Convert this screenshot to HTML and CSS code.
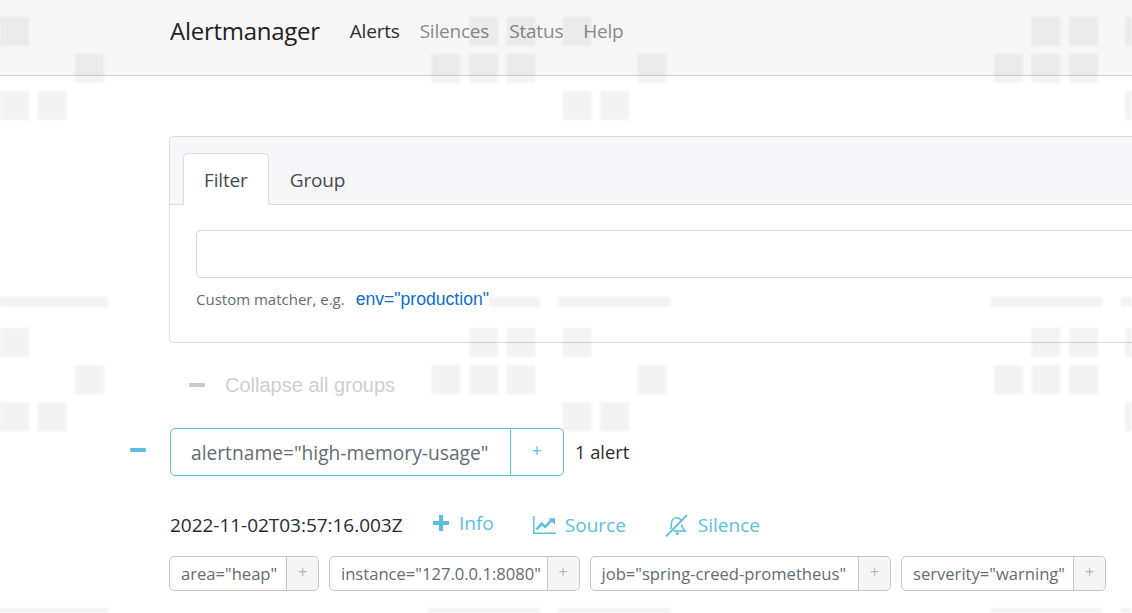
FILE: index.html
```html
<!DOCTYPE html>
<html lang="en">
<head>
    <meta charset="UTF-8">
    <title>Alertmanager</title>
    <link rel="stylesheet" href="styles.css">
</head>
<body>

<nav class="navbar">
    <a class="brand">Alertmanager</a>
    <a class="nav-link active">Alerts</a>
    <a class="nav-link">Silences</a>
    <a class="nav-link">Status</a>
    <a class="nav-link">Help</a>
</nav>

<main class="container">
    <section class="card">
        <div class="card-header">
            <a class="tab active">Filter</a>
            <a class="tab">Group</a>
        </div>
        <div class="card-body">
            <input class="filter-input" type="text">
            <div class="hint">
                <small>Custom matcher, e.g.</small>
                <a class="example">env="production"</a>
            </div>
        </div>
    </section>

    <div class="collapse-all">
        <span class="dash muted"></span>
        <span>Collapse all groups</span>
    </div>

    <div class="group-row">
        <span class="dash info group-dash"></span>
        <div class="group-label">
            <span class="group-text">alertname="high-memory-usage"</span>
            <span class="group-add">+</span>
        </div>
        <span class="alert-count">1 alert</span>
    </div>

    <div class="alert-row">
        <span class="timestamp">2022-11-02T03:57:16.003Z</span>
        <a class="action action-info">
            <svg class="icon-plus" viewBox="0 0 16 16"><path d="M6 0h4v6h6v4h-6v6H6v-6H0V6h6z"/></svg>
            Info
        </a>
        <a class="action action-source">
            <svg class="icon-chart" viewBox="0 0 23 18"><path d="M.8 0v17.200H23" fill="none" stroke="currentColor" stroke-width="1.400"/><path d="M3.500 13.500 8.600 7.600l3.600 3.400 6-6.600" fill="none" stroke="currentColor" stroke-width="2.600"/><path d="M15.500 2.200h6.500v6.500z"/></svg>
            Source
        </a>
        <a class="action action-silence">
            <svg class="icon-bell" viewBox="0 0 23 23"><path d="M16.600 7.600C15.600 5.400 13.800 3.800 11.500 3.800 8.400 3.800 6.500 6.400 6.500 9.500c0 2.300-.4 4.200-1 5.700M16.700 10.200c.3 3.400 1.600 5.300 3.300 6.700H8.200" fill="none" stroke="currentColor" stroke-width="1.500"/><path d="M10.300 18.500h4c0 1.500-.9 2.500-2 2.500s-2-1-2-2.500z"/><path d="M1 22.300 22 1" fill="none" stroke="currentColor" stroke-width="1.800"/></svg>
            Silence
        </a>
    </div>

    <div class="tags">
        <div class="tag"><span class="tag-text">area="heap"</span><span class="tag-add">+</span></div>
        <div class="tag"><span class="tag-text">instance="127.0.0.1:8080"</span><span class="tag-add">+</span></div>
        <div class="tag"><span class="tag-text">job="spring-creed-prometheus"</span><span class="tag-add">+</span></div>
        <div class="tag"><span class="tag-text">serverity="warning"</span><span class="tag-add">+</span></div>
    </div>
</main>

<!-- watermark tiles over the whole page -->
<svg class="watermark" width="1132" height="613">
    <defs>
        <pattern id="tiles" width="562.5" height="311" patternUnits="userSpaceOnUse">
            <rect x="0" y="17" width="29" height="29"/>
            <rect x="469" y="17" width="29" height="29"/>
            <rect x="506.500" y="17" width="29" height="29"/>
            <rect x="75" y="54" width="29" height="29"/>
            <rect x="431.500" y="54" width="29" height="29"/>
            <rect x="469" y="54" width="29" height="29"/>
            <rect x="506.500" y="54" width="29" height="29"/>
            <rect x="0" y="91" width="29" height="29"/>
            <rect x="37.500" y="91" width="29" height="29"/>
            <rect x="0" y="297" width="108" height="10"/>
            <rect x="558" y="297" width="4.500" height="10"/>
            <rect x="428" y="297" width="112" height="10"/>
        </pattern>
    </defs>
    <rect width="1132" height="613" fill="url(#tiles)"/>
</svg>

</body>
</html>
```

FILE: styles.css
```css
html, body {
    margin: 0;
    height: 100%;
    overflow: hidden;
}
body {
    position: relative;
    font-family: "Open Sans", "Noto Sans", sans-serif;
    font-size: 20px;
    color: #292b2c;
    background-color: #fff;
}
a {
    text-decoration: none;
}
svg {
    display: block;
}

.navbar {
    display: flex;
    align-items: center;
    height: 75px;
    padding-left: 170px;
    background-color: #f7f7f7;
    border-bottom: 1px solid #d2d2d2;
}
.brand {
    font-size: 24px;
    letter-spacing: -0.27px;
    color: #1f1f1f;
    margin-right: 30px;
    margin-bottom: 14px;
}
.nav-link {
    font-size: 19px;
    letter-spacing: -0.2px;
    color: #8a8a8a;
    margin-right: 20px;
    margin-bottom: 14px;
}
.nav-link.active {
    color: #2c2c2c;
}

.container {
    padding-left: 169px;
}

/* the card runs off the right of the window, so no right edge */
.card {
    margin-top: 60px;
    border: 1px solid #dcdcdc;
    border-right: none;
    border-radius: 5px 0 0 5px;
    box-sizing: border-box;
    height: 207px;
}
.card-header {
    display: flex;
    height: 68px;
    box-sizing: border-box;
    padding: 16px 0 0 13px;
    background-color: #f7f7f9;
    border-bottom: 1px solid #dcdcdc;
    border-radius: 5px 0 0 0;
}
.tab {
    font-size: 19px;
    letter-spacing: -0.15px;
    padding: 13px 20px 0;
    height: 52px;
    box-sizing: border-box;
    color: #464a4c;
    border: 1px solid transparent;
}
.tab.active {
    background-color: #fff;
    border-color: #dcdcdc;
    border-bottom-color: #fff;
    border-radius: 5px 5px 0 0;
}
.card-body {
    padding: 25px 0 25px 26px;
}
.filter-input {
    display: block;
    width: 100%;
    height: 48px;
    box-sizing: border-box;
    border: 1px solid #d6d6d6;
    border-right: none;
    border-radius: 5px 0 0 5px;
    background-color: #fff;
}
.hint {
    display: flex;
    align-items: center;
    gap: 11px;
    margin-top: 9px;
    height: 24px;
}
.hint small {
    font-size: 15px;
    color: #636c72;
}
/* sits above the watermark, its white box hides the band behind it */
.example {
    position: relative;
    z-index: 1;
    font-family: "Liberation Sans", Arial, sans-serif;
    font-size: 17.6px;
    color: #0a6ed1;
    background-color: #fff;
}

.dash {
    display: block;
    width: 16px;
    height: 4px;
    border-radius: 1px;
}
.dash.muted {
    background-color: #c9c9c9;
}
.dash.info {
    background-color: #5bc0de;
}
.collapse-all {
    display: flex;
    align-items: center;
    gap: 20px;
    height: 24px;
    margin-top: 30px;
    padding-left: 20px;
    font-family: "Liberation Sans", Arial, sans-serif;
    font-size: 20px;
    color: #cfcfcf;
}

.group-row {
    position: relative;
    display: flex;
    align-items: center;
    margin-top: 31px;
    margin-left: 1px;
}
.group-dash {
    position: absolute;
    left: -40px;
    top: 20px;
}
.group-label {
    display: flex;
    height: 48px;
    box-sizing: border-box;
    border: 1px solid #5bc0de;
    border-radius: 5px;
    color: #636c72;
}
.group-text {
    width: 340px;
    box-sizing: border-box;
    padding-left: 20px;
    font-size: 19.2px;
    line-height: 47px;
    border-right: 1px solid #5bc0de;
    white-space: nowrap;
}
.group-add {
    width: 52px;
    text-align: center;
    font-size: 18px;
    line-height: 42px;
    color: #5bc0de;
}
.alert-count {
    margin-left: 11px;
    margin-bottom: 2px;
    font-size: 18.3px;
    color: #292b2c;
}

.alert-row {
    display: flex;
    align-items: center;
    height: 40px;
    margin-top: 29px;
    margin-left: 1px;
}
.timestamp {
    width: 263px;
    font-size: 19px;
    letter-spacing: -0.03px;
}
.action {
    display: flex;
    align-items: center;
    font-size: 19px;
    color: #5bc0de;
    fill: #5bc0de;
    margin-right: 39px;
}
.action-info {
    margin-bottom: 4px;
}
.icon-plus {
    width: 16px;
    height: 16px;
    margin-right: 10px;
}
.icon-chart {
    width: 23px;
    height: 18px;
    margin-right: 9px;
}
.icon-bell {
    width: 23px;
    height: 23px;
    margin-right: 10px;
}

.tags {
    display: grid;
    grid-template-columns: 150px 250.5px 301.5px 205px;
    gap: 10px;
    margin-top: 11px;
}
.tag {
    display: flex;
    height: 35px;
    box-sizing: border-box;
    border: 1px solid #c6c6c6;
    border-radius: 5px;
    color: #636c72;
    white-space: nowrap;
}
.tag-text {
    flex: 1;
    padding-left: 11px;
    font-size: 16.6px;
    line-height: 34px;
    border-right: 1px solid #c6c6c6;
}
.tag-add {
    flex: none;
    width: 31px;
    text-align: center;
    font-size: 16px;
    line-height: 31px;
    color: #b5b5b5;
    background-color: #f5f5f5;
    border-radius: 0 5px 5px 0;
}

.watermark {
    position: absolute;
    left: 0;
    top: 0;
    fill: rgba(0, 0, 0, 0.048);
    filter: blur(1.1px);
    pointer-events: none;
}
```
